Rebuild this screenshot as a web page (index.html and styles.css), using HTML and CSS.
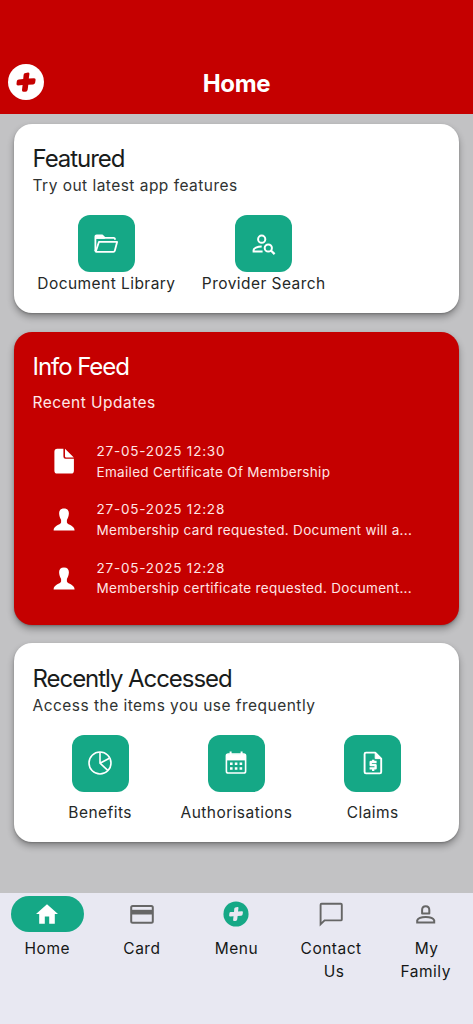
FILE: index.html
```html
<!DOCTYPE html>
<html lang="en">
<head>
<meta charset="utf-8">
<title>Home</title>
<link rel="stylesheet" href="styles.css">
</head>
<body>
<header class="topbar">
  <svg class="logo" viewBox="0 0 36 36"><circle cx="18" cy="18" r="18" fill="#fff"/><path class="logo-cross" d="M16.8 9.2L20 8.4Q21.7 8.2 21.4 9.9L20.8 14.6L26 14.2Q27.8 14.1 27.6 15.8L27.2 18.5Q27 20.3 25.2 20.4L20.3 20.7L19.7 25.4Q19.4 27.6 17.4 27.7L15.4 27.8Q13.7 27.8 14 26L14.6 21.1L10 21.4Q8.2 21.4 8.5 19.7L8.8 17.2Q9 15.5 10.8 15.4L15.2 15.1L15.6 10.9Q15.8 9.5 16.8 9.2Z"/></svg>
  <h1 class="topbar-title">Home</h1>
</header>
<main class="content">
  <section class="card featured">
    <h2 class="card-title">Featured</h2>
    <p class="card-sub">Try out latest app features</p>
    <div class="tiles tiles-two">
      <div class="tile"><span class="tile-icon"><svg width="26" height="26" viewBox="0 0 26 26" fill="none" stroke="#fff" stroke-width="1.8" stroke-linejoin="round" stroke-linecap="round"><path d="M2.4 19.4V5.6Q2.4 4.4 3.6 4.4H9.2L11.7 6.8H20.8Q21.8 6.8 22 8" /><path d="M2.8 4.6H9.1L11.6 7.4H3.2Z" fill="#fff" stroke-width="1"/><path d="M2.8 20.6L5.9 10.9H24.1L21.8 19.7Q21.5 20.8 20.4 20.8H3.4Q2.4 20.8 2.4 19.4"/></svg></span><span class="tile-label">Document Library</span></div>
      <div class="tile"><span class="tile-icon"><svg width="26" height="26" viewBox="0 0 26 26" fill="none" stroke="#fff" stroke-width="2"><circle cx="10.7" cy="8.2" r="3.6"/><path d="M10.7 15.4C6.3 15.5 2.6 17.2 2.6 19V20.6H11.6"/><circle cx="17.3" cy="17" r="3.6"/><path d="M19.9 19.5L23.6 23.1" stroke-width="2.2"/></svg></span><span class="tile-label">Provider Search</span></div>
    </div>
  </section>
  <section class="card feed">
    <h2 class="card-title">Info Feed</h2>
    <p class="card-sub">Recent Updates</p>
    <ul class="feed-list">
      <li class="feed-item"><svg class="feed-icon" viewBox="0 0 24 28" fill="#fff"><path d="M5.3 1.8H11.4V9.6Q11.4 11.8 13.4 11.8H21.9V23.7Q21.9 26.6 19 26.6H5.3Q2.4 26.6 2.4 23.7V4.7Q2.4 1.8 5.3 1.8ZM13 1.8L21.8 10.4H13.8Q13 10.4 13 9.6Z"/></svg><div class="feed-text"><p class="feed-date">27-05-2025 12:30</p><p class="feed-msg">Emailed Certificate Of Membership</p></div></li>
      <li class="feed-item"><svg class="feed-icon" viewBox="0 0 24 28" fill="#fff"><path d="M12 3.4C15.3 3.4 17 5.4 16.9 8.3C16.8 11.3 15.9 13.4 14.9 14.9V17.6C16 20.2 22.6 20.6 22.6 25.6H1.6C1.6 20.6 8 20.2 9.1 17.6V14.9C8.1 13.4 7.2 11.3 7.1 8.3C7 5.4 8.7 3.4 12 3.4Z"/></svg><div class="feed-text"><p class="feed-date">27-05-2025 12:28</p><p class="feed-msg">Membership card requested. Document will a...</p></div></li>
      <li class="feed-item"><svg class="feed-icon" viewBox="0 0 24 28" fill="#fff"><path d="M12 3.4C15.3 3.4 17 5.4 16.9 8.3C16.8 11.3 15.9 13.4 14.9 14.9V17.6C16 20.2 22.6 20.6 22.6 25.6H1.6C1.6 20.6 8 20.2 9.1 17.6V14.9C8.1 13.4 7.2 11.3 7.1 8.3C7 5.4 8.7 3.4 12 3.4Z"/></svg><div class="feed-text"><p class="feed-date">27-05-2025 12:28</p><p class="feed-msg">Membership certificate requested. Document...</p></div></li>
    </ul>
  </section>
  <section class="card recent">
    <h2 class="card-title">Recently Accessed</h2>
    <p class="card-sub">Access the items you use frequently</p>
    <div class="tiles tiles-three">
      <div class="tile"><span class="tile-icon"><svg width="26" height="26" viewBox="0 0 26 26" fill="none" stroke="#fff" stroke-width="1.6"><circle cx="13" cy="13" r="11"/><path d="M13 2V13.2L21 20.6M13 13.2L22.4 8.2"/></svg></span><span class="tile-label">Benefits</span></div>
      <div class="tile"><span class="tile-icon"><svg width="26" height="26" viewBox="0 0 26 26" fill="none"><path d="M7.6 1.4v4M18.6 1.4v4" stroke="#fff" stroke-width="2"/><rect x="3.4" y="4" width="19.2" height="19" rx="1.8" stroke="#fff" stroke-width="1.6"/><path d="M3 4.2h20v6.2H3z" fill="#fff"/><path d="M7 13.8h2.6M11.8 13.8h2.6M16.6 13.8h2.6M7 18.4h2.6M11.8 18.4h2.6M16.6 18.4h2.6" stroke="#fff" stroke-width="2.5"/></svg></span><span class="tile-label">Authorisations</span></div>
      <div class="tile"><span class="tile-icon"><svg width="26" height="26" viewBox="0 0 26 26" fill="none" stroke="#fff" stroke-width="1.9" stroke-linejoin="round"><path d="M15.2 2.6H6Q4.6 2.6 4.6 4V22Q4.6 23.4 6 23.4H19.8Q21.2 23.4 21.2 22V8.6Z"/><path d="M15.2 2.6V8.6H21Z" fill="#fff" stroke-width="1"/><path d="M16.6 12H10.7V15.2H15.6V18.4H9.6M13.2 9.7V12M13.2 18.6V20.9" stroke-width="2.3"/></svg></span><span class="tile-label">Claims</span></div>
    </div>
  </section>
</main>
<nav class="nav">
  <div class="nav-item"><span class="nav-icon active"><svg width="28" height="28" viewBox="0 0 28 28"><path d="M14 4.2L25 14.1H21.8V23.7H16.2V16.6H11.8V23.7H6.2V14.1H3Z" fill="#fff"/></svg></span><span class="nav-label">Home</span></div>
  <div class="nav-item"><span class="nav-icon"><svg width="28" height="28" viewBox="0 0 28 28"><rect x="3.2" y="5.9" width="21.6" height="16.8" rx="1.5" fill="none" stroke="#666" stroke-width="2"/><path d="M3 9.8h22v4.7H3z" fill="#666"/></svg></span><span class="nav-label">Card</span></div>
  <div class="nav-item"><span class="nav-icon"><svg width="26" height="26" viewBox="0 0 36 36"><circle cx="18" cy="18" r="17.4" fill="#15a886"/><path fill="#e8e8f2" d="M16.8 9L20 8.2Q21.7 8 21.4 9.7L20.8 14.5L26 14.1Q27.8 14 27.6 15.7L27.2 18.5Q27 20.3 25.2 20.4L20.3 20.7L19.7 25.4Q19.4 27.6 17.4 27.7L15.4 27.8Q13.7 27.8 14 26L14.6 21.1L10 21.4Q8.2 21.4 8.5 19.7L8.8 17.2Q9 15.5 10.8 15.4L15.2 15.1L15.6 10.7Q15.8 9.3 16.8 9Z"/></svg></span><span class="nav-label">Menu</span></div>
  <div class="nav-item"><span class="nav-icon"><svg width="28" height="28" viewBox="0 0 28 28" fill="none" stroke="#666" stroke-width="1.9"><path d="M3.6 24.3V4.8Q3.6 3.8 4.6 3.8H23.8Q24.8 3.8 24.8 4.8V19.4Q24.8 20.4 23.8 20.4H7.6Z"/></svg></span><span class="nav-label">Contact<br><span class="shift-wide">Us</span></span></div>
  <div class="nav-item"><span class="nav-icon"><svg width="28" height="28" viewBox="0 0 28 28" fill="none" stroke="#666" stroke-width="2"><path d="M10.1 13.4V10C10.1 4.9 17.3 4.9 17.3 10V13.4Z" stroke-linejoin="round"/><path d="M5.2 22.4V20.3C7 15.8 20.4 15.8 22.2 20.3V22.4Z"/></svg></span><span class="nav-label"><span class="shift-narrow">My</span><br>Family</span></div>
</nav>
</body>
</html>
```
FILE: styles.css
```css
* { box-sizing: border-box; margin: 0; padding: 0; }
body {
  width: 473px; height: 1024px; overflow: hidden;
  display: flex; flex-direction: column;
  background: #c2c2c4; color: #191c1b;
  font-family: Inter, "Liberation Sans", sans-serif;
}
svg { display: block; flex: none; }
.topbar {
  height: 114px; padding: 64px 8px 0; background: #c50000;
  display: grid; grid-template-columns: 36px 1fr 36px; align-items: start;
}
.logo { width: 36px; height: 36px; }
.logo-cross { fill: #c50000; }
.topbar-title { font-size: 24px; line-height: 40px; font-weight: 700; letter-spacing: -0.3px; color: #fff; text-align: center; }
.content { flex: 1; padding: 10px 14px 0; display: flex; flex-direction: column; }
.card { border-radius: 18px; background: #fff; box-shadow: 0 4px 7px rgba(0, 0, 0, .32), 0 1px 2px rgba(0, 0, 0, .2); white-space: nowrap; }
.featured { height: 189px; padding-top: 20px; margin-bottom: 19px; }
.feed { height: 293px; padding-top: 20px; margin-bottom: 18px; background: #c50000; color: #fff; }
.recent { height: 199px; padding-top: 21px; }
.card-title { padding-left: 18.5px; font-size: 24px; line-height: 30px; font-weight: 400; letter-spacing: -1.05px; }
.card-sub { padding-left: 18.5px; font-size: 15.5px; line-height: 24px; letter-spacing: 0.47px; color: #303332; }
.feed .card-sub { margin-top: 9px; color: #ffe9e9; }
.tiles { display: grid; }
.tiles-two { grid-template-columns: 157.4px 157.4px; margin: 17px 0 0 13.7px; }
.tiles-three { grid-template-columns: repeat(3, 136.3px); margin: 16.5px 0 0 18px; }
.tile { display: flex; flex-direction: column; align-items: center; }
.tile-icon { width: 57px; height: 57px; border-radius: 12px; background: #15a886; display: flex; align-items: center; justify-content: center; }
.tile-label { font-size: 15.5px; line-height: 24px; letter-spacing: 0.45px; color: #252827; }
.tiles-three .tile-label { margin-top: 9px; }
.feed-list { list-style: none; margin-top: 26px; }
.feed-item { height: 58.4px; display: flex; padding-left: 38px; }
.feed-icon { width: 24px; height: 28px; margin-top: 6px; }
.feed-text { margin-left: 20.5px; color: #ffe5e5; }
.feed-date { font-size: 13.5px; line-height: 20.6px; letter-spacing: 0.8px; }
.feed-msg { font-size: 13.5px; line-height: 20.6px; letter-spacing: 0.32px; }
.nav { height: 131px; padding-top: 3px; background: #e8e8f2; display: grid; grid-template-columns: repeat(5, 1fr); }
.nav-item { display: flex; flex-direction: column; align-items: center; }
.nav-icon { width: 73px; height: 36px; border-radius: 18px; display: flex; align-items: center; justify-content: center; }
.active { background: #15a886; }
.nav-label { margin-top: 5px; font-size: 15.5px; line-height: 23px; letter-spacing: 0.5px; text-align: center; color: #151716; }
.shift-wide { padding-left: 6px; }
.shift-narrow { padding-left: 2px; }
```
